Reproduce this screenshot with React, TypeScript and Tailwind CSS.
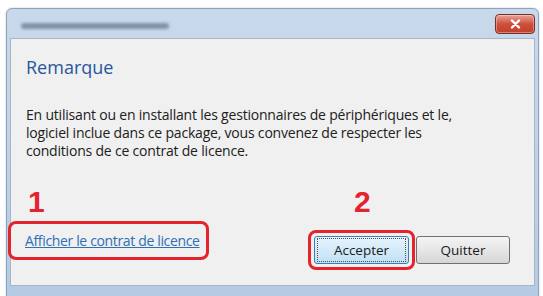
export default function App() {
  return (
    <div className="h-[296px] w-[543px] overflow-hidden bg-white pl-[6px] pr-[4px] pt-[8px] font-['Segoe_UI','Open_Sans',sans-serif]">
      <div className="flex h-[300px] flex-col rounded-t-[6px] border border-[#8ea3bd] bg-gradient-to-b from-[#c9d9ec] to-[#b4cae4] shadow-[0_0_2px_rgba(0,0,0,0.25)]">
        {/* title bar */}
        <div className="flex h-[29px] items-center justify-between pl-[14px] pr-[3px]">
          <div className="mt-[4px] h-[6px] w-[148px] rounded-full bg-[#52627a] opacity-60 blur-[1.5px]" />
          <div className="flex h-[20px] w-[40px] items-center justify-center rounded-[4px] border border-[#7a2f26] bg-gradient-to-b from-[#e7a397] via-[#cd4f3c] to-[#c2402d] shadow-[inset_0_0_0_1px_rgba(255,255,255,0.35)]">
            <svg width="11" height="10" viewBox="0 0 11 10">
              <path d="M2 1.5 L9 8.5 M9 1.5 L2 8.5" stroke="white" strokeWidth="2.4" strokeLinecap="round" />
            </svg>
          </div>
        </div>

        {/* content */}
        <div className="mx-[3px] flex h-[248px] flex-col border border-[#a6b6c8] bg-[#f0f0f0]">
          <div className="px-[15px] pt-[17px]">
            <h1 className="font-['Open_Sans',sans-serif] text-[18px] leading-[22px] text-[#26579b]">
              Remarque
            </h1>
            <p className="mt-[28px] font-['Open_Sans',sans-serif] text-[14px] leading-[18px] tracking-[-0.2px] text-[#202020]">
              En utilisant ou en installant les gestionnaires de périphériques et le,
              <br />
              logiciel inclue dans ce package, vous convenez de respecter les
              <br />
              conditions de ce contrat de licence.
            </p>
          </div>

          <div className="mt-[28px] flex items-start justify-between pr-[24px]">
            <div className="flex flex-col">
              <span className="pl-[17px] font-['Liberation_Sans',sans-serif] text-[30px] font-bold leading-[28px] text-[#e4232d]">
                1
              </span>
              <div className="ml-[-3px] mt-[5px] rounded-[8px] border-[3px] border-[#e4232d] pb-[5px] pl-[14px] pr-[6px] pt-[4px]">
                <a className="font-['Open_Sans',sans-serif] text-[14px] leading-[18px] tracking-[-0.35px] text-[#2f6fb5] underline">
                  Afficher le contrat de licence
                </a>
              </div>
            </div>

            <div className="flex flex-col items-start">
              <span className="ml-[46px] font-['Liberation_Sans',sans-serif] text-[30px] font-bold leading-[28px] text-[#e4232d]">
                2
              </span>
              <div className="mt-[14px] flex items-center">
                <div className="rounded-[8px] border-[3px] border-[#e4232d] p-[3px]">
                  <button className="flex h-[28px] w-[95px] items-center justify-center rounded-[3px] border border-[#3c7fb1] bg-gradient-to-b from-[#e8f4fc] to-[#bfe0f5]">
                    <span className="flex h-[24px] w-[89px] items-center justify-center border border-dotted border-[#505050] font-['Open_Sans',sans-serif] text-[13.5px] text-[#1a1a1a]">
                      Accepter
                    </span>
                  </button>
                </div>
                <button className="ml-[1px] flex h-[28px] w-[94px] items-center justify-center rounded-[3px] border border-[#707070] bg-gradient-to-b from-[#f4f4f4] via-[#e6e6e6] to-[#d6d6d6] font-['Open_Sans',sans-serif] text-[13.5px] text-[#1a1a1a]">
                  Quitter
                </button>
              </div>
            </div>
          </div>
        </div>
      </div>
    </div>
  );
}
